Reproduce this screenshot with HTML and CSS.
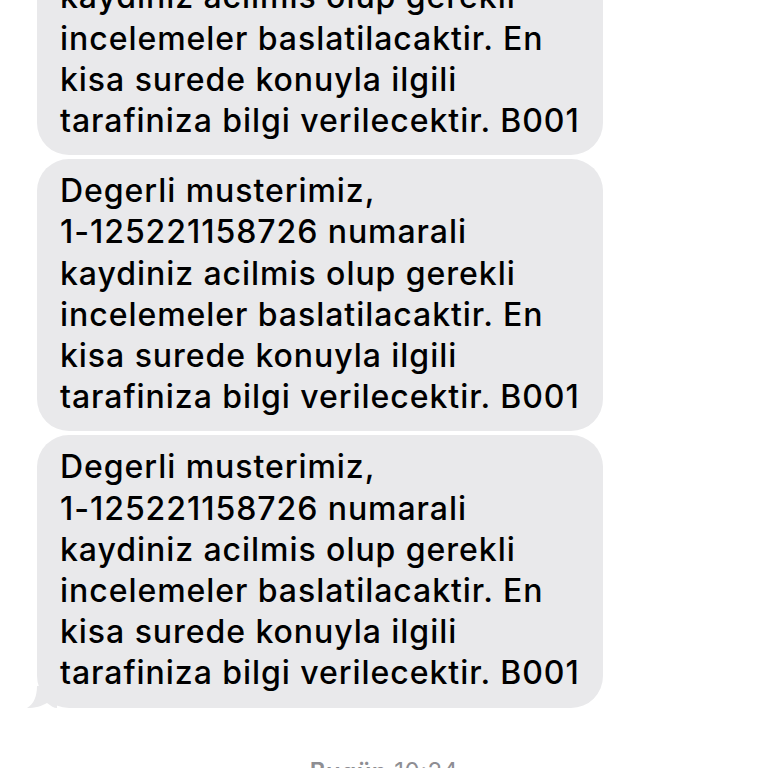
FILE: index.html
```html
<!DOCTYPE html>
<html>
<head>
<meta charset="utf-8">
<link rel="stylesheet" href="styles.css">
</head>
<body>
<div class="thread">
  <div class="bubble">Degerli musterimiz,<br>1-125221158726 numarali<br>kaydiniz acilmis olup gerekli<br>incelemeler baslatilacaktir. En<br>kisa surede konuyla ilgili<br>tarafiniza bilgi verilecektir. B001</div>
  <div class="bubble">Degerli musterimiz,<br>1-125221158726 numarali<br>kaydiniz acilmis olup gerekli<br>incelemeler baslatilacaktir. En<br>kisa surede konuyla ilgili<br>tarafiniza bilgi verilecektir. B001</div>
  <div class="bubble last">Degerli musterimiz,<br>1-125221158726 numarali<br>kaydiniz acilmis olup gerekli<br>incelemeler baslatilacaktir. En<br>kisa surede konuyla ilgili<br>tarafiniza bilgi verilecektir. B001<svg class="tail" width="30" height="22" viewBox="0 0 30 22"><path d="M10,0 C10,10 7,18 0,22 C8,22 15,20 20,17 C24,20 27,22 30,22 L30,0 Z" fill="#e9e9eb"/></svg></div>
  <div class="stamp"><span class="day">Bugün</span> 10:24</div>
</div>
</body>
</html>
```
FILE: styles.css
```css
html, body {
  margin: 0;
  padding: 0;
  background: #ffffff;
  overflow: hidden;
  height: 768px;
}
.thread {
  display: flex;
  flex-direction: column;
  align-items: flex-start;
  gap: 4px;
  margin-top: -117px;
  padding-left: 37px;
}
.bubble {
  position: relative;
  width: 566px;
  box-sizing: border-box;
  background: #e9e9eb;
  border-radius: 32px;
  padding: 11px 10px 14px 23px;
  font-family: Inter, "Liberation Sans", sans-serif;
  font-size: 32px;
  font-weight: 500;
  letter-spacing: 0.95px;
  line-height: 41.2px;
  color: #000;
  white-space: nowrap;
}
.tail {
  position: absolute;
  left: -10px;
  bottom: 0;
}
.stamp {
  align-self: stretch;
  margin-left: -37px;
  margin-top: 45px;
  text-align: center;
  font-family: Inter, "Liberation Sans", sans-serif;
  font-size: 24px;
  letter-spacing: 0.5px;
  color: #8e8e93;
}
.day {
  font-weight: 600;
}
```
